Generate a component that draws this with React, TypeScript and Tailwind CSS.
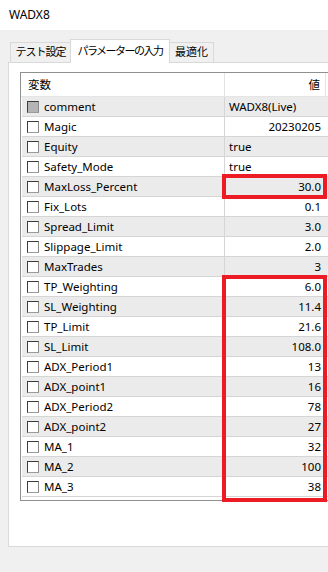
const rows: { name: string; value: string; left?: boolean; disabled?: boolean }[] = [
  { name: "comment", value: "WADX8(Live)", left: true, disabled: true },
  { name: "Magic", value: "20230205" },
  { name: "Equity", value: "true", left: true },
  { name: "Safety_Mode", value: "true", left: true },
  { name: "MaxLoss_Percent", value: "30.0" },
  { name: "Fix_Lots", value: "0.1" },
  { name: "Spread_Limit", value: "3.0" },
  { name: "Slippage_Limit", value: "2.0" },
  { name: "MaxTrades", value: "3" },
  { name: "TP_Weighting", value: "6.0" },
  { name: "SL_Weighting", value: "11.4" },
  { name: "TP_Limit", value: "21.6" },
  { name: "SL_Limit", value: "108.0" },
  { name: "ADX_Period1", value: "13" },
  { name: "ADX_point1", value: "16" },
  { name: "ADX_Period2", value: "78" },
  { name: "ADX_point2", value: "27" },
  { name: "MA_1", value: "32" },
  { name: "MA_2", value: "100" },
  { name: "MA_3", value: "38" },
];

function CheckBox({ gray }: { gray?: boolean }) {
  return (
    <span
      className={
        gray
          ? "w-[12px] h-[12px] shrink-0 border border-[#3c3c3c] border-r-[#8a8a8a] border-b-[#9a9a9a] bg-[#b4b4b4]"
          : "w-[12px] h-[12px] shrink-0 border border-[#3c3c3c] border-r-[#8a8a8a] border-b-[#9a9a9a] bg-white"
      }
    />
  );
}

export default function App() {
  return (
    <div
      className="relative w-[328px] h-[572px] overflow-hidden bg-[#f0f0f0] text-black"
      style={{ fontFamily: '"Noto Sans", "Noto Sans CJK JP", sans-serif' }}
    >
      {/* title bar */}
      <div className="h-[30px] bg-white flex items-center pl-[9px] text-[12px]">WADX8</div>

      {/* tabs */}
      <div className="flex items-end pl-[10px] pt-[9px] h-[32px] text-[11px]">
        <div className="w-[60px] h-[20px] border-l border-t border-[#d9d9d9] flex items-center justify-center tracking-[-1px]">
          テスト設定
        </div>
        <div className="relative z-10 -mb-px w-[100px] h-[24px] bg-white border-l border-t border-r border-[#d9d9d9] flex items-start pt-[3px] justify-center tracking-[-1.5px]">
          パラメーターの入力
        </div>
        <div className="w-[44px] h-[20px] border-t border-r border-[#d9d9d9] flex items-center justify-center">
          最適化
        </div>
      </div>

      {/* panel */}
      <div className="ml-[8px] w-[340px] h-[485px] bg-white border border-[#d9d9d9] pl-[11px] pt-[9px] overflow-hidden">
        <div className="w-[320px] h-[429px] border border-[#8e8f8f] text-[11.5px]">
          <div className="flex h-[24px] border-b border-[#e5e5e5]">
            <div className="w-[203px] flex items-center pl-[7px]">変数</div>
            <div className="w-[102px] flex items-center justify-end pr-[5px] border-l border-r border-[#e3e3e3]">値</div>
          </div>
          {rows.map((r, i) => (
            <div
              key={r.name}
              className={
                i % 2 === 0
                  ? "flex h-[20px] border-b border-[#d5d5d5] bg-[#ebebeb] ml-px"
                  : "flex h-[20px] border-b border-[#d5d5d5] bg-white ml-px"
              }
            >
              <div className="w-[202px] flex items-center pl-[5px] gap-[5px]">
                <CheckBox gray={r.disabled} />
                <span>{r.name}</span>
              </div>
              <div
                className={
                  r.left
                    ? "w-[102px] flex items-center pl-[4px] border-l border-[#d5d5d5]"
                    : "w-[102px] flex items-center justify-end pr-[5px] border-l border-[#d5d5d5]"
                }
              >
                {r.value}
              </div>
            </div>
          ))}
        </div>
      </div>

      {/* red annotation boxes */}
      <div className="absolute left-[222px] top-[174px] w-[105px] h-[25px] border-4 border-[#ed1c24]" />
      <div className="absolute left-[222px] top-[275px] w-[105px] h-[227px] border-4 border-[#ed1c24]" />
    </div>
  );
}
